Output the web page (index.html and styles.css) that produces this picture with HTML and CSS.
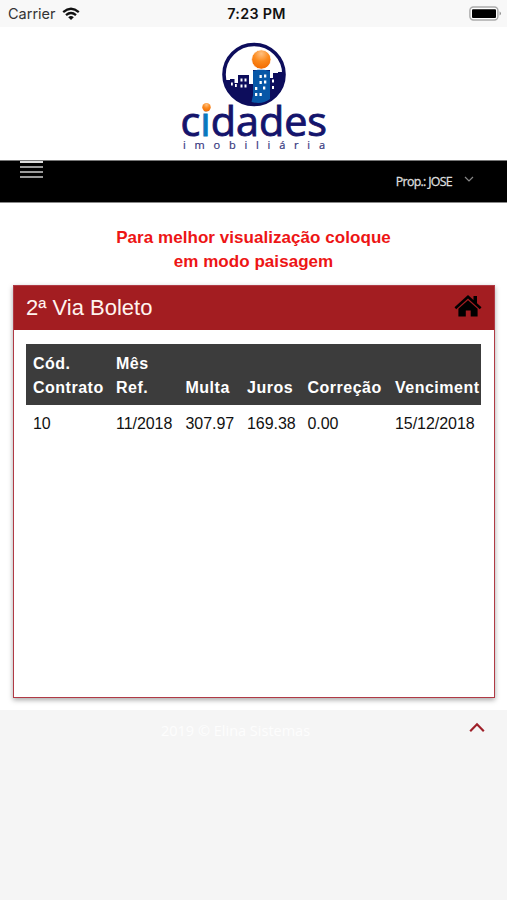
FILE: index.html
```html
<!DOCTYPE html>
<html lang="pt-BR">
<head>
<meta charset="utf-8">
<title>2ª Via Boleto</title>
<link rel="stylesheet" href="styles.css">
</head>
<body>
<div class="status">
  <div class="carrier"><span>Carrier</span>
    <svg width="18" height="14" viewBox="0 0 18 14" fill="none" stroke="#111" stroke-width="2.3"><path d="M1.2 5.1Q9-1.6 16.8 5.1M4 8.1Q9 3.8 14 8.1"/><path d="M6.2 10.2Q9 8 11.8 10.2L9 13Z" fill="#111" stroke="none"/></svg>
  </div>
  <span class="time">7:23 PM</span>
  <svg class="battery" width="33" height="16" viewBox="0 0 33 16"><rect x=".9" y="1" width="28" height="13" rx="3.5" fill="#fff" stroke="#aaa" stroke-width="1.4"/><rect x="3" y="3.2" width="24" height="8.8" rx="1" fill="#000"/><path d="M30.7 5.2Q33 7.5 30.7 9.6Z" fill="#777"/></svg>
</div>
<header class="brand">
  <svg width="170" height="125" viewBox="0 0 170 125">
    <defs>
      <clipPath id="disc"><circle cx="84" cy="39.5" r="31"/></clipPath>
      <radialGradient id="ball" cx=".5" cy=".2" r=".8"><stop offset="0" stop-color="#ffc080"/><stop offset=".5" stop-color="#fb8a1e"/><stop offset="1" stop-color="#f26a00"/></radialGradient>
    </defs>
    <circle cx="84" cy="39.5" r="30" fill="#fff" stroke="#0d0d5c" stroke-width="3.6"/>
    <g clip-path="url(#disc)">
      <path d="M52 45H60V44H64.500V48H68V40H79V49H83V35H100V43H103V38H108V37H117V72H52Z" fill="#0d0d5c"/>
      <path d="M83 36Q91 33 100 36V64Q92 70 81.500 67L83 60Z" fill="#0757a7"/>
    </g>
    <path d="M61 47.500h1.800v3H61zM65 49h1.800v3H65zM70.500 43.500h2v3h-2zM74.500 43.500h2v3h-2zM70.500 49.500h2v3h-2zM74.500 49.500h2v3h-2zM89.500 40h2.300v3h-2.300zM94 39.500h2.300v3H94zM89.500 46h2.300v3h-2.300zM94 45.500h2.300v3H94zM85 52h2.300v3H85zM93 51.500h2.300v3H93zM85 58h2.300v3H85zM89.500 58h2.300v3h-2.300zM102 44.500h2v3h-2zM102 51h2v3h-2z" fill="#fff"/>
    <circle cx="91.300" cy="24.500" r="9.700" fill="url(#ball)" stroke="#fff" stroke-width=".8"/>
    <text class="wordmark" x="10.500" y="101.300" textLength="146.500" lengthAdjust="spacingAndGlyphs">c<tspan class="blue">i</tspan>dades</text>
    <path class="dot-back" d="M31.500 66.500h9v10h-9z"/>
    <circle cx="36.500" cy="72.300" r="4.200" fill="url(#ball)"/>
    <text class="subtitle" x="13" y="113.700" textLength="142">imobiliária</text>
  </svg>
</header>
<nav class="bar">
  <div class="menu"><i></i><i></i><i></i><i></i></div>
  <div class="user"><span>Prop.: JOSE</span>
    <svg width="10" height="7" viewBox="0 0 10 7" fill="none" stroke="#888" stroke-width="1.200"><path d="M1 1L5 5L9 1"/></svg>
  </div>
</nav>
<main>
  <p class="notice"><span>Para melhor visualização coloque</span><br><span>em modo paisagem</span></p>
  <section class="panel">
    <div class="panel-head"><h1>2ª Via Boleto</h1>
      <svg width="28" height="24" viewBox="0 0 28 24"><path d="M14 1L19.500 6V2H23V9.200L27.500 13.300L25.800 15.200L14 4.600L2.200 15.200L.5 13.300Z"/><path d="M14 6.200L23.600 14.800V22.500H16.700V16.500H11.800V22.500H4.400V14.800Z"/></svg>
    </div>
    <div class="table-wrap">
      <table>
        <colgroup><col class="c1"><col class="c2"><col class="c3"><col class="c4"><col class="c5"><col class="c6"></colgroup>
        <thead><tr><th>Cód. Contrato</th><th>Mês Ref.</th><th>Multa</th><th>Juros</th><th>Correção</th><th>Venciment</th></tr></thead>
        <tbody><tr><td>10</td><td>11/2018</td><td>307.97</td><td>169.38</td><td>0.00</td><td>15/12/2018</td></tr></tbody>
      </table>
    </div>
  </section>
</main>
<footer>
  <span>2019 © Elina Sistemas</span>
  <svg width="16" height="11" viewBox="0 0 16 11" fill="none" stroke="#9f2029" stroke-width="2.200"><path d="M1.200 9.200L8 2.300L14.800 9.200"/></svg>
</footer>
</body>
</html>
```
FILE: styles.css
```css
* { box-sizing: border-box; }
body {
  margin: 0;
  height: 900px;
  overflow: hidden;
  display: flex;
  flex-direction: column;
  background: #fff;
  font-family: "Liberation Sans", Arial, sans-serif;
  color: #111;
}
svg { display: block; flex: none; }
.status {
  height: 27px;
  flex: none;
  display: grid;
  grid-template-columns: 1fr auto 1fr;
  align-items: center;
  padding: 0 5px 0 8px;
  background: #f8f8f8;
  font: 15px Inter, sans-serif;
}
.carrier { display: flex; align-items: center; gap: 6px; color: #333; font-size: 14.5px; }
.time { font-size: 14.3px; font-weight: 600; letter-spacing: .3px; margin-left: 3px; }
.battery { justify-self: end; }
.brand { height: 133px; flex: none; padding: 8px 0 0 170px; }
.wordmark { font: 400 40.5px "Open Sans", sans-serif; fill: #14146c; stroke: #14146c; stroke-width: .9px; }
.blue { fill: #0878bd; stroke: #0878bd; }
.dot-back { fill: #fff; }
.subtitle { font: 400 11px "Open Sans", sans-serif; fill: #36367d; stroke: #36367d; stroke-width: .2px; }
.bar {
  height: 43px;
  flex: none;
  display: flex;
  justify-content: space-between;
  align-items: flex-start;
  background: #000;
  border-top: 1px solid #777;
  border-bottom: 1px solid #888;
  padding: 0 33px 0 20px;
}
.menu { display: grid; gap: 3px; width: 23px; }
.menu i { height: 2px; background: #999; }
.menu i:first-child { background: #ddd; }
.user {
  display: flex;
  align-items: center;
  gap: 12px;
  padding-top: 12px;
  color: #ddd;
  font: 12.4px/17px "Open Sans", sans-serif;
  letter-spacing: -.7px;
  -webkit-text-stroke: .3px #ddd;
}
.user svg { margin-bottom: 4px; }
main { height: 507px; flex: none; padding: 23px 13px 0 13px; }
.notice {
  margin: 0 0 11px;
  text-align: center;
  font-size: 17px;
  font-weight: bold;
  line-height: 24px;
  letter-spacing: .05px;
  color: #ed1515;
}
.panel {
  height: 413px;
  margin-right: -1px;
  border: 1px solid #b03a45;
  box-shadow: 0 2px 5px rgba(0, 0, 0, .35);
}
.panel-head {
  height: 44px;
  display: flex;
  justify-content: space-between;
  align-items: center;
  padding: 0 12px;
  background: #a31d21;
}
.panel-head h1 { margin: 0; font-size: 22px; font-weight: normal; color: #fff3ee; }
.panel-head svg { margin-bottom: 5px; }
.table-wrap { margin: 14px 13px 0 12px; overflow: hidden; }
table { width: 100%; table-layout: fixed; border-collapse: collapse; }
.c1 { width: 83px; }
.c2 { width: 69.5px; }
.c3 { width: 61.5px; }
.c4 { width: 60.5px; }
.c5 { width: 87.500px; }
th, td { text-align: left; padding: 7px 0 6px 7px; font-size: 16px; line-height: 24px; }
td { letter-spacing: -.05px; }
th {
  background: #3c3c3c;
  color: #fff;
  vertical-align: bottom;
  padding: 8px 0 5px 7px;
  letter-spacing: .5px;
}
footer {
  flex: 1;
  display: flex;
  align-items: flex-start;
  justify-content: space-between;
  padding: 12px 22px 0 161px;
  background: #f5f5f5;
  color: #fdfdfd;
  font: 14.5px/18px "Open Sans", sans-serif;
}
```
